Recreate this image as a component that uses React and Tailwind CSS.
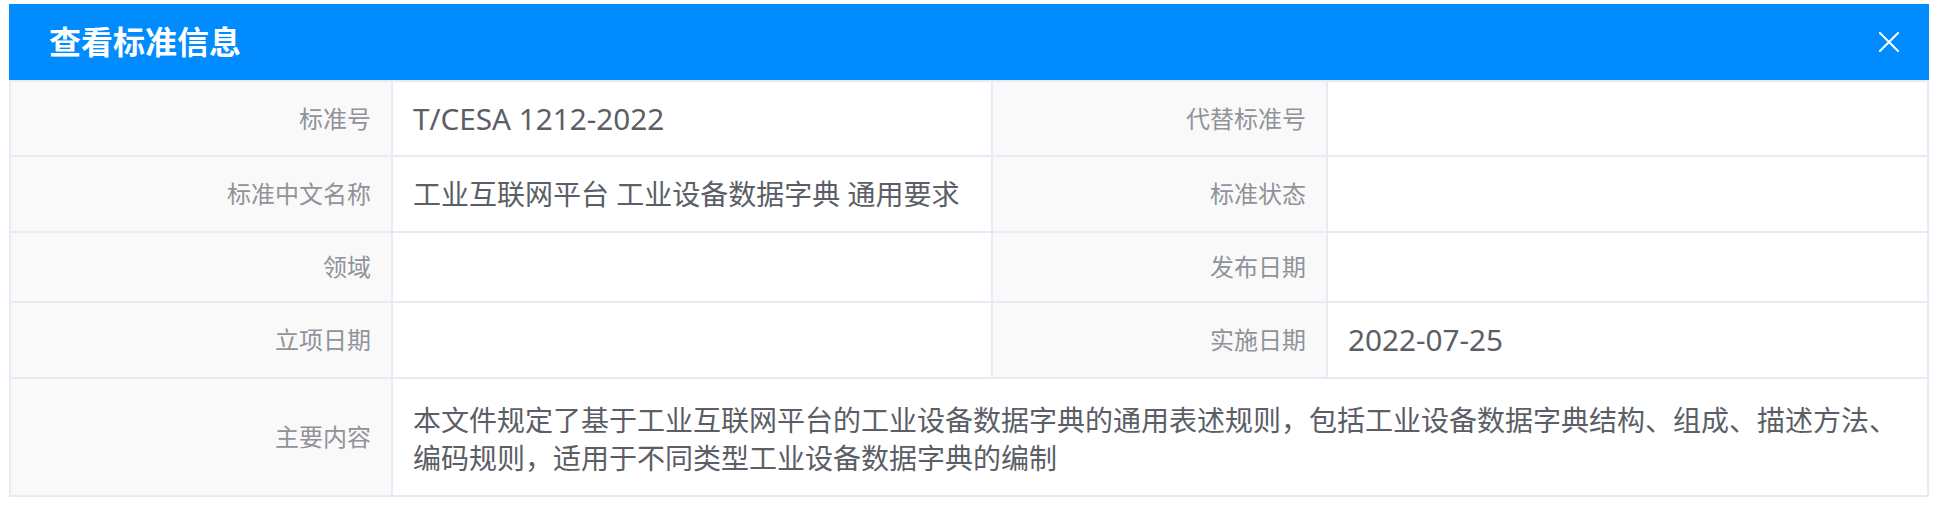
import React from "react";

/* Standard info dialog
 * Header bar with title + close, then a bordered 4-col key/value table.
 */
const rows = [
  [
    { label: "标准号", value: "T/CESA 1212-2022", latin: true },
    { label: "代替标准号", value: "" },
  ],
  [
    { label: "标准中文名称", value: "工业互联网平台 工业设备数据字典 通用要求" },
    { label: "标准状态", value: "" },
  ],
  [
    { label: "领域", value: "" },
    { label: "发布日期", value: "" },
  ],
  [
    { label: "立项日期", value: "" },
    { label: "实施日期", value: "2022-07-25", latin: true },
  ],
];

const font = { fontFamily: '"Noto Sans", "Noto Sans CJK SC", sans-serif' };

const Label = ({ children }) => (
  <div className="bg-[#f9f9fa] flex items-center justify-end pr-[20px] text-[24px] leading-[32px] text-[#909399]">
    {children}
  </div>
);

const Value = ({ children, className = "" }) => (
  <div className={`bg-white flex items-center px-[20px] text-[28px] leading-[38px] text-[#5b5e66] ${className}`}>
    {children}
  </div>
);

const App = () => {
  return (
    <div className="w-full bg-white pt-[4px] px-[9px]" style={font}>
      <div className="h-[76px] bg-[#008cff] flex items-center justify-between pl-[40px] pr-[30px]">
        <h1 className="text-white text-[32px] font-bold leading-none">查看标准信息</h1>
        <button type="button" className="w-[20px] h-[20px] flex items-center justify-center">
          <svg width="20" height="20" viewBox="0 0 20 20" fill="none">
            <path d="M1 1L19 19M19 1L1 19" stroke="white" strokeWidth="2" strokeLinecap="square" />
          </svg>
        </button>
      </div>

      <div className="grid grid-cols-[380px_598px_333px_1fr] grid-rows-[73px_74px_68px_74px_116px] gap-[2px] p-[2px] bg-[#e8ebf5]">
        {rows.map((row, i) =>
          row.map((cell, j) => (
            <React.Fragment key={`${i}-${j}`}>
              <Label>{cell.label}</Label>
              <Value className={cell.latin ? "text-[29.7px]" : ""}>{cell.value}</Value>
            </React.Fragment>
          ))
        )}
        <Label>主要内容</Label>
        <Value className="col-span-3 pt-[4px]">
          本文件规定了基于工业互联网平台的工业设备数据字典的通用表述规则，包括工业设备数据字典结构、组成、描述方法、编码规则，适用于不同类型工业设备数据字典的编制
        </Value>
      </div>
    </div>
  );
};

export default App;
